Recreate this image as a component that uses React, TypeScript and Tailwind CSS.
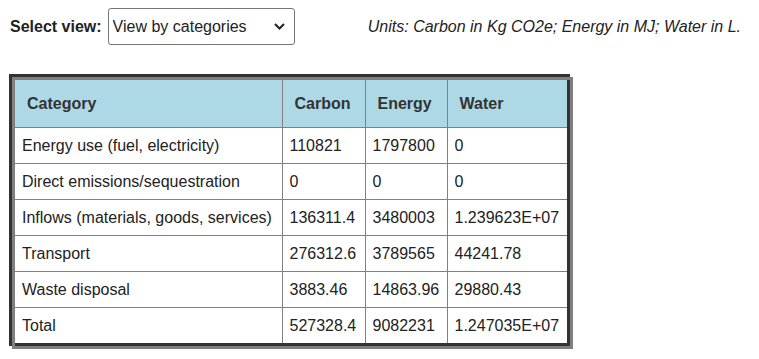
import React from "react";

const rows: string[][] = [
  ["Energy use (fuel, electricity)", "110821", "1797800", "0"],
  ["Direct emissions/sequestration", "0", "0", "0"],
  ["Inflows (materials, goods, services)", "136311.4", "3480003", "1.239623E+07"],
  ["Transport", "276312.6", "3789565", "44241.78"],
  ["Waste disposal", "3883.46", "14863.96", "29880.43"],
  ["Total", "527328.4", "9082231", "1.247035E+07"],
];

const headers = ["Category", "Carbon", "Energy", "Water"];

export default function App() {
  return (
    <div className="w-[759px] h-[359px] bg-white text-[#222] font-['Liberation_Sans',Arial,sans-serif] text-[16px]">
      <div className="flex items-center pt-[8px] pl-[10px] pr-[18px]">
        <span className="font-bold text-[#222]">Select view:</span>
        <div className="relative ml-[6px]">
          <select className="appearance-none w-[187px] h-[37px] border border-[#767676] rounded-[3px] bg-white pl-[4px] text-[16px] text-[#222] outline-none">
            <option>View by categories</option>
          </select>
          <svg
            className="absolute right-[10px] top-[15px] pointer-events-none"
            width="11"
            height="7"
            viewBox="0 0 11 7"
          >
            <path d="M1 1 L5.5 5.5 L10 1" fill="none" stroke="#222" strokeWidth="2" />
          </svg>
        </div>
        <span className="ml-auto italic text-[#222]">
          Units: Carbon in Kg CO2e; Energy in MJ; Water in L.
        </span>
      </div>
      <div className="mt-[32px] ml-[12px] w-fit border-[3px] border-[#808080] shadow-[-3px_-3px_0_#333]">
        <div className="border-r-[3px] border-b-[3px] border-[#333]">
          <table className="border-collapse table-fixed w-[552px]">
            <colgroup>
              <col className="w-[267px]" />
              <col className="w-[83px]" />
              <col className="w-[82px]" />
              <col className="w-[120px]" />
            </colgroup>
            <thead>
              <tr>
                {headers.map((h, i) => (
                  <th
                    key={h}
                    className={
                      i > 0
                        ? "bg-[#add8e6] px-3 py-[14px] leading-[19px] font-bold text-left text-[#333] border-l border-[#808080]"
                        : "bg-[#add8e6] px-3 py-[14px] leading-[19px] font-bold text-left text-[#333]"
                    }
                  >
                    {h}
                  </th>
                ))}
              </tr>
            </thead>
            <tbody>
              {rows.map((r, ri) => (
                <tr key={ri} className="border-t border-[#808080]">
                  {r.map((c, ci) => (
                    <td
                      key={ci}
                      className={
                        ci > 0
                          ? "px-[7px] py-2 leading-[19px] text-left whitespace-nowrap border-l border-[#808080]"
                          : "px-[7px] py-2 leading-[19px] text-left whitespace-nowrap"
                      }
                    >
                      {c}
                    </td>
                  ))}
                </tr>
              ))}
            </tbody>
          </table>
        </div>
      </div>
    </div>
  );
}
